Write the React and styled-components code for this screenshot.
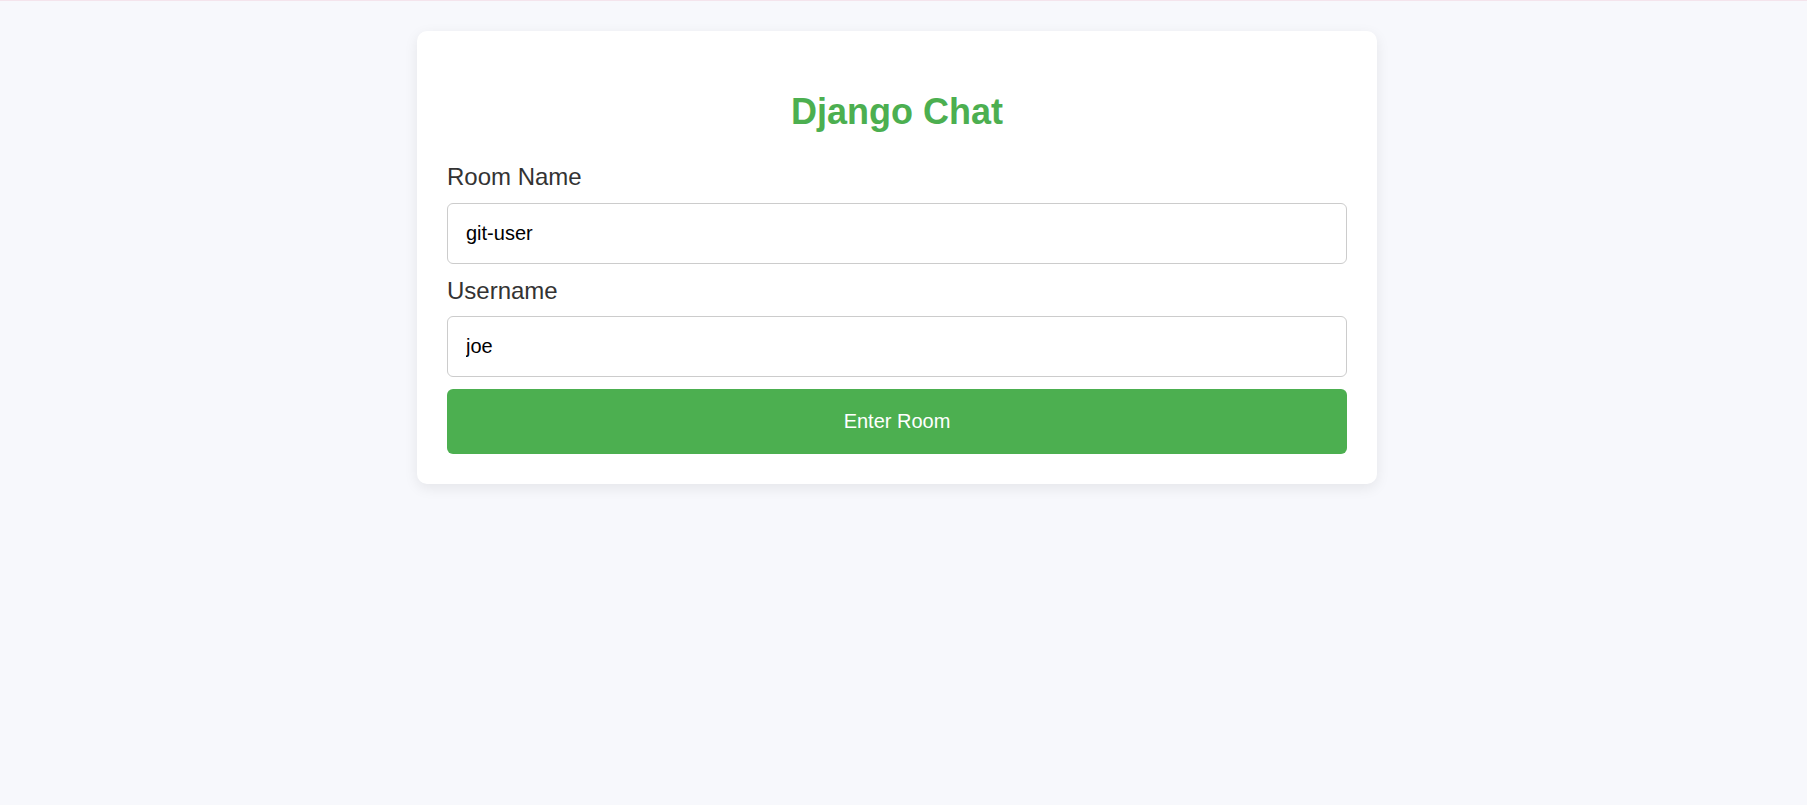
import React from "react";
import styled, { createGlobalStyle } from "styled-components";

const GlobalStyle = createGlobalStyle`
  html, body {
    margin: 0;
    padding: 0;
    background: #f7f8fc;
    font-family: "Liberation Sans", Arial, sans-serif;
  }
  * { box-sizing: border-box; }
`;

const Page = styled.div`
  min-height: 805px;
  border-top: 1px solid #f4e4ec;
  padding: 30px 13px 0 0;
  display: flex;
  justify-content: center;
  align-items: flex-start;
`;

const Card = styled.div`
  width: 960px;
  background: #ffffff;
  border-radius: 10px;
  padding: 30px;
  box-shadow: 0 4px 14px rgba(0, 0, 0, 0.08);
`;

const Title = styled.h1`
  margin: 30px 0 0;
  font-size: 36px;
  line-height: 42px;
  font-weight: 700;
  color: #4caf50;
  text-align: center;
`;

const Form = styled.form`
  display: flex;
  flex-direction: column;
  margin-top: 30px;
`;

const Label = styled.label`
  display: block;
  font-size: 24px;
  line-height: 28px;
  color: #333333;
  margin: ${(p) => (p.$first ? "0 0 12px" : "13px 0 11px")};
`;

const Input = styled.input`
  display: block;
  width: 100%;
  height: 61px;
  padding: 0 18px;
  border: 1px solid #cccccc;
  border-radius: 6px;
  font-family: "Liberation Sans", Arial, sans-serif;
  font-size: 20px;
  color: #000000;
  background: #ffffff;
  outline: none;
`;

const Button = styled.button`
  margin-top: 12px;
  width: 100%;
  height: 65px;
  border: none;
  border-radius: 6px;
  background: #4caf50;
  color: #ffffff;
  font-family: "Liberation Sans", Arial, sans-serif;
  font-size: 20px;
  cursor: pointer;
`;

export default function App() {
  return (
    <>
      <GlobalStyle />
      <Page>
        <Card>
          <Title>Django Chat</Title>
          <Form onSubmit={(e) => e.preventDefault()}>
            <Label $first htmlFor="room">Room Name</Label>
            <Input id="room" type="text" defaultValue="git-user" />
            <Label htmlFor="user">Username</Label>
            <Input id="user" type="text" defaultValue="joe" />
            <Button type="submit">Enter Room</Button>
          </Form>
        </Card>
      </Page>
    </>
  );
}
